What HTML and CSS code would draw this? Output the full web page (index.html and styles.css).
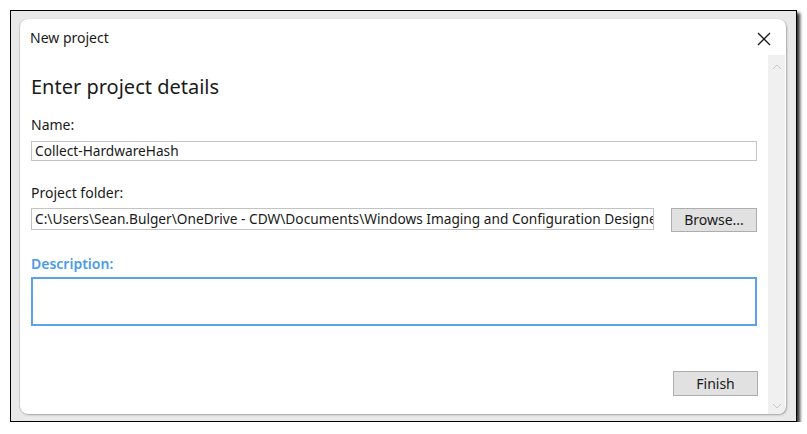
FILE: index.html
```html
<!DOCTYPE html>
<html>
<head>
<meta charset="utf-8">
<link rel="stylesheet" href="styles.css">
</head>
<body>
<div class="frame">
  <div class="dialog">
    <div class="header">
      <span class="title">New project</span>
      <svg class="close" width="14" height="14" viewBox="0 0 14 14"><path d="M1 1 L13 13 M13 1 L1 13" stroke="#1a1a1a" stroke-width="1.3" fill="none"/></svg>
    </div>
    <div class="body">
      <div class="content">
        <div class="heading">Enter project details</div>
        <div class="label">Name:</div>
        <div class="input name-input">Collect-HardwareHash</div>
        <div class="label folder-label">Project folder:</div>
        <div class="folder-row">
          <div class="input folder-input">C:\Users\Sean.Bulger\OneDrive - CDW\Documents\Windows Imaging and Configuration Designer</div>
          <div class="btn browse">Browse...</div>
        </div>
        <div class="label desc-label">Description:</div>
        <div class="textarea"></div>
        <div class="footer">
          <div class="btn finish">Finish</div>
        </div>
      </div>
      <div class="scrollbar">
        <svg width="12" height="8" viewBox="0 0 12 8"><path d="M2 6 L6 2 L10 6" stroke="#c8c8c8" stroke-width="1" fill="none"/></svg>
        <svg width="12" height="8" viewBox="0 0 12 8"><path d="M2 2 L6 6 L10 2" stroke="#c8c8c8" stroke-width="1" fill="none"/></svg>
      </div>
    </div>
  </div>
</div>
</body>
</html>
```

FILE: styles.css
```css
html, body {
  margin: 0;
  padding: 0;
  background: #ffffff;
}
body {
  font-family: "Noto Sans", "Open Sans", sans-serif;
  color: #1a1a1a;
  padding: 10px 0 0 10px;
}
.frame {
  border: 1px solid #000;
  background: #e9e9e9;
  box-shadow: 3px 3px 3px rgba(0,0,0,0.8);
  padding: 8px 8px 7px 9px;
  width: 768px;
  height: 395px;
}
.dialog {
  width: 766px;
  height: 395px;
  background: #fff;
  border-radius: 8px;
  box-shadow: 1px 1px 2px rgba(0,0,0,0.3), -1px 0 1px rgba(0,0,0,0.12);
  display: flex;
  flex-direction: column;
  overflow: hidden;
}
.header {
  height: 36px;
  display: flex;
  align-items: flex-start;
  justify-content: space-between;
  padding: 9px 15px 0 10px;
  box-sizing: border-box;
  flex: none;
}
.title {
  font-size: 14px;
  line-height: 20px;
}
.close {
  margin-top: 4px;
}
.body {
  flex: 1;
  display: flex;
  min-height: 0;
}
.content {
  flex: 1;
  padding: 0 11px 0 11px;
  display: flex;
  flex-direction: column;
}
.heading {
  font-size: 20px;
  line-height: 26px;
  margin-top: 19px;
}
.label {
  font-size: 14px;
  line-height: 20px;
  margin-top: 15px;
}
.input {
  border: 1px solid #c3c3c3;
  height: 20px;
  box-sizing: border-box;
  font-size: 13.7px;
  line-height: 18px;
  padding: 0 3px;
  margin-top: 6px;
  white-space: nowrap;
  overflow: hidden;
}
.folder-label {
  margin-top: 22px;
}
.folder-row {
  display: flex;
  align-items: flex-start;
  gap: 17px;
  margin-top: 5px;
}
.folder-input {
  flex: none;
  width: 623px;
  height: 22px;
  line-height: 20px;
  margin-top: 0;
}
.btn {
  background: #e1e1e1;
  border: 1px solid #adadad;
  box-sizing: border-box;
  font-size: 14px;
  text-align: center;
  white-space: nowrap;
}
.browse {
  width: 86px;
  height: 24px;
  line-height: 22px;
}
.desc-label {
  margin-top: 22px;
  color: #4a9be6;
  font-weight: 600;
}
.textarea {
  margin-top: 3px;
  height: 49px;
  border: 2px solid #5aa2ea;
  box-sizing: border-box;
}
.footer {
  display: flex;
  justify-content: flex-end;
  margin-top: 45px;
}
.finish {
  width: 85px;
  height: 25px;
  line-height: 23px;
  margin-right: -1px;
}
.scrollbar {
  width: 17px;
  flex: none;
  background: #f0f0f0;
  display: flex;
  flex-direction: column;
  justify-content: space-between;
  align-items: center;
  padding: 8px 0 4px;
  margin-right: 2px;
}
```
